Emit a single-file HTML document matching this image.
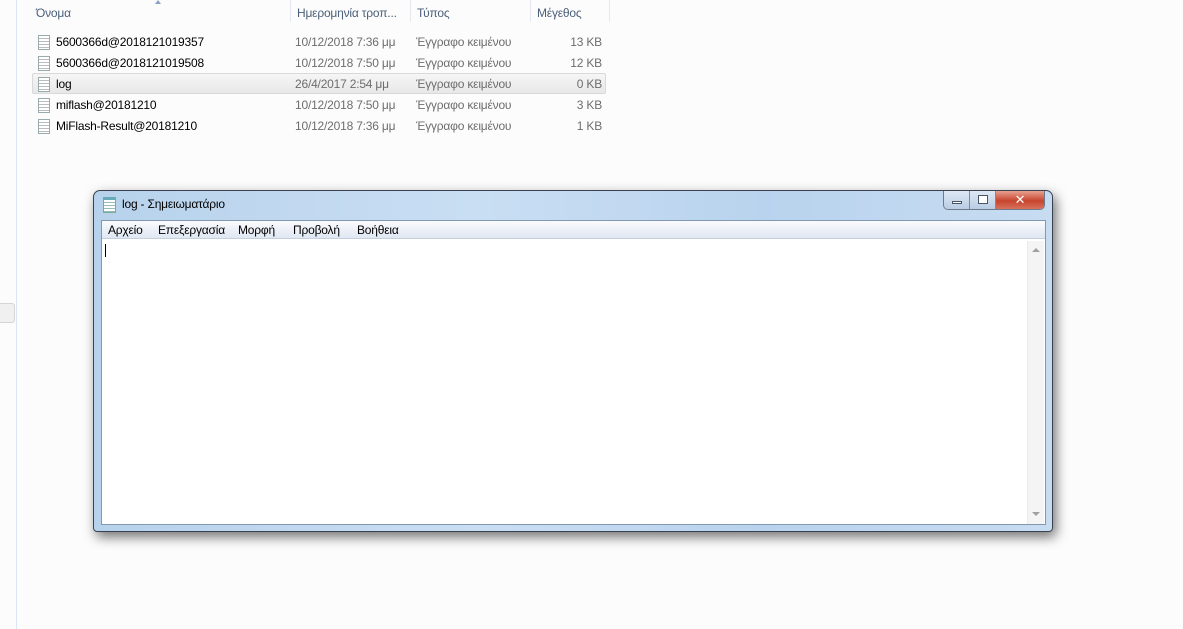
<!DOCTYPE html>
<html><head><meta charset="utf-8"><style>
*{margin:0;padding:0;box-sizing:border-box}
body{width:1183px;height:629px;background:#fcfcfc;position:relative;overflow:hidden;font-family:"Segoe UI","Liberation Sans","DejaVu Sans",sans-serif;font-size:12px;color:#000;letter-spacing:-0.2px}
.a{position:absolute}
.hd{top:6px;color:#4c607a;font-size:12px}
.sep{top:0;width:1px;height:22px;background:#e5e9ee}
.row{left:32px;width:574px;height:21px}
.row span{position:absolute;top:3px}
.ic{position:absolute;left:6px;top:3px;width:12px;height:15px;border:1px solid #9aa;background:repeating-linear-gradient(#fff 0 2px,#bbb 2px 3px)}
.dt,.ty{color:#6d6d6d}
</style></head><body>
<div class="a" style="left:16px;top:0;width:1px;height:629px;background:#dbe7f5"></div>
<div class="a" style="left:-4px;top:303px;width:19px;height:20px;border:1px solid #d5d5d5;border-radius:3px;background:#f0f0f0"></div>
<div class="a" style="left:155px;top:0;width:0;height:0;border-left:3px solid transparent;border-right:3px solid transparent;border-bottom:4px solid #8aa3c0"></div>
<div class="a hd" style="left:36px">Όνομα</div>
<div class="a sep" style="left:290px"></div><div class="a hd" style="left:297px">Ημερομηνία τροπ...</div>
<div class="a sep" style="left:410px"></div><div class="a hd" style="left:417px">Τύπος</div>
<div class="a sep" style="left:530px"></div><div class="a hd" style="left:537px">Μέγεθος</div>
<div class="a sep" style="left:609px"></div>

<div class="a row" style="top:32px"><i class="ic"></i><span style="left:24px">5600366d@2018121019357</span><span class="dt" style="left:263px">10/12/2018 7:36 μμ</span><span class="ty" style="left:384px">Έγγραφο κειμένου</span><span class="dt" style="right:4px">13 KB</span></div>
<div class="a row" style="top:53px"><i class="ic"></i><span style="left:24px">5600366d@2018121019508</span><span class="dt" style="left:263px">10/12/2018 7:50 μμ</span><span class="ty" style="left:384px">Έγγραφο κειμένου</span><span class="dt" style="right:4px">12 KB</span></div>
<div class="a row" style="top:73px;border:1px solid #d9d9d9;border-radius:2px;background:linear-gradient(#f6f6f6,#e8e8e8)"><i class="ic" style="left:5px;top:3px"></i><span style="left:23px;top:3px">log</span><span class="dt" style="left:262px;top:3px">26/4/2017 2:54 μμ</span><span class="ty" style="left:383px;top:3px">Έγγραφο κειμένου</span><span class="dt" style="right:3px;top:3px">0 KB</span></div>
<div class="a row" style="top:95px"><i class="ic"></i><span style="left:24px">miflash@20181210</span><span class="dt" style="left:263px">10/12/2018 7:50 μμ</span><span class="ty" style="left:384px">Έγγραφο κειμένου</span><span class="dt" style="right:4px">3 KB</span></div>
<div class="a row" style="top:116px"><i class="ic"></i><span style="left:24px">MiFlash-Result@20181210</span><span class="dt" style="left:263px">10/12/2018 7:36 μμ</span><span class="ty" style="left:384px">Έγγραφο κειμένου</span><span class="dt" style="right:4px">1 KB</span></div>

<div class="a" style="left:93px;top:190px;width:960px;height:342px;border:1px solid #3a4250;border-radius:7px 7px 4px 4px;background:linear-gradient(90deg,#b7d2ec,#c9def3 40%,#b9d3ee 70%,#c7dcf1);box-shadow:3px 5px 12px rgba(0,0,0,.55)"></div>
<div class="a" style="left:103px;top:197px;width:13px;height:16px;background:repeating-linear-gradient(#fff 0 2px,#9bb 2px 3px);border:1px solid #7a9;border-top:3px solid #6ab"></div>
<div class="a" style="left:122px;top:197px;font-size:12px">log - Σημειωματάριο</div>
<div class="a" style="left:943px;top:191px;width:102px;height:19px;border:1px solid #6d7a8c;border-top:none;border-radius:0 0 5px 5px;overflow:hidden;display:flex">
 <div style="width:26px;background:linear-gradient(#dfe9f5,#b9cce3);border-right:1px solid #7d8ba0;position:relative"><i style="position:absolute;left:8px;top:10px;width:10px;height:3px;border:1px solid #4a5566;background:#fff"></i></div>
 <div style="width:26px;background:linear-gradient(#dfe9f5,#b9cce3);border-right:1px solid #7d8ba0;position:relative"><i style="position:absolute;left:8px;top:4px;width:10px;height:9px;border:1px solid #4a5566;background:#fff"></i></div>
 <div style="flex:1;background:linear-gradient(#e8a190,#c7442e 55%,#d8725c);color:#fff;font-weight:bold;text-align:center;font-size:13px;line-height:17px">✕</div>
</div>
<div class="a" style="left:101px;top:220px;width:945px;height:305px;border:1px solid #8497b0;background:#fff"></div>
<div class="a" style="left:102px;top:221px;width:943px;height:18px;background:linear-gradient(#fafbfd,#dfe7f2);border-bottom:1px solid #c5d0de"></div>
<div class="a" style="left:108px;top:223px">Αρχείο</div>
<div class="a" style="left:158px;top:223px">Επεξεργασία</div>
<div class="a" style="left:238px;top:223px">Μορφή</div>
<div class="a" style="left:293px;top:223px">Προβολή</div>
<div class="a" style="left:357px;top:223px">Βοήθεια</div>
<div class="a" style="left:105px;top:244px;width:1px;height:13px;background:#000"></div>
<div class="a" style="left:1027px;top:241px;width:17px;height:283px;background:#f4f4f4;border-left:1px solid #eaeaea"></div>
<div class="a" style="left:1032px;top:248px;border-left:4px solid transparent;border-right:4px solid transparent;border-bottom:4px solid #a0a0a0"></div>
<div class="a" style="left:1032px;top:512px;border-left:4px solid transparent;border-right:4px solid transparent;border-top:4px solid #a0a0a0"></div>
</body></html>
